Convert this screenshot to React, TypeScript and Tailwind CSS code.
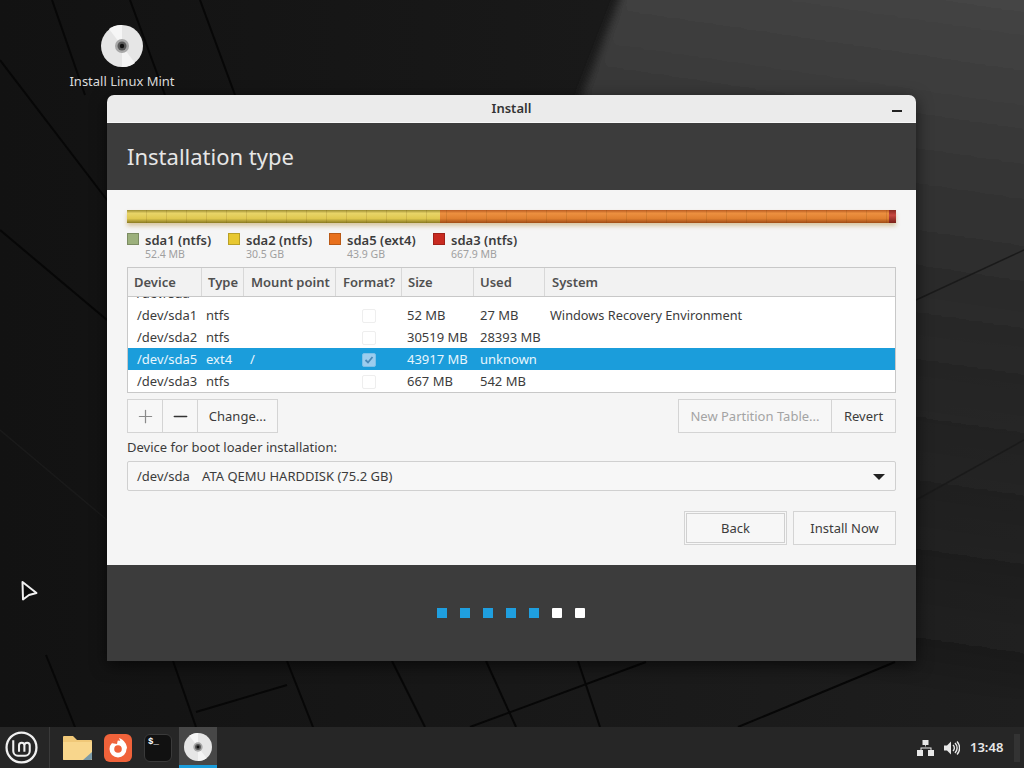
import React from 'react';
import { Minus, Plus } from 'lucide-react';

const font = { fontFamily: '"Noto Sans", sans-serif' };

const legend = [
  { name: 'sda1 (ntfs)', size: '52.4 MB', color: 'bg-[#9cb07c]', width: 'w-[101px]' },
  { name: 'sda2 (ntfs)', size: '30.5 GB', color: 'bg-[#e8c830]', width: 'w-[101px]' },
  { name: 'sda5 (ext4)', size: '43.9 GB', color: 'bg-[#e8701c]', width: 'w-[104px]' },
  { name: 'sda3 (ntfs)', size: '667.9 MB', color: 'bg-[#c82a20]', width: 'w-[100px]' },
];

const columns = 'grid grid-cols-[74px_42px_92px_66px_72px_71px_1fr]';

const headers = [
  { label: 'Device', pad: 'pl-[6px]' },
  { label: 'Type', pad: 'pl-[6px]' },
  { label: 'Mount point', pad: 'pl-[7px]' },
  { label: 'Format?', pad: 'pl-[7px]' },
  { label: 'Size', pad: 'pl-[6px]' },
  { label: 'Used', pad: 'pl-[6px]' },
  { label: 'System', pad: 'pl-[7px]' },
];

const rows = [
  { device: '/dev/sda1', type: 'ntfs', mount: '', checked: false, size: '52 MB', used: '27 MB', system: 'Windows Recovery Environment' },
  { device: '/dev/sda2', type: 'ntfs', mount: '', checked: false, size: '30519 MB', used: '28393 MB', system: '' },
  { device: '/dev/sda5', type: 'ext4', mount: '/', checked: true, size: '43917 MB', used: 'unknown', system: '', selected: true },
  { device: '/dev/sda3', type: 'ntfs', mount: '', checked: false, size: '667 MB', used: '542 MB', system: '' },
];

const Disc = ({ size }: { size: number }) => (
  <svg width={size} height={size} viewBox="0 0 42 42">
    <circle cx="21" cy="21" r="21" fill="#e6e6e6" />
    <path d="M21 21 L8 4 A21 21 0 0 1 21 0 Z" fill="#f6f6f6" />
    <path d="M21 21 L34 38 A21 21 0 0 1 21 42 Z" fill="#f4f4f4" />
    <circle cx="21" cy="21" r="7" fill="#a8a8a8" />
    <circle cx="21" cy="21" r="4.5" fill="#5a5a5a" />
    <circle cx="21" cy="21" r="2.2" fill="#111111" />
  </svg>
);

const Wallpaper = () => (
  <svg className="absolute inset-0 h-full w-full" viewBox="0 0 1024 727" preserveAspectRatio="none">
    <defs>
      <linearGradient id="wall-base" x1="0" y1="0" x2="1" y2="0">
        <stop offset="0" stopColor="#121212" />
        <stop offset="1" stopColor="#1e1e1e" />
      </linearGradient>
      <linearGradient id="wall-light" x1="0.9" y1="0" x2="0.8" y2="1">
        <stop offset="0" stopColor="#464646" />
        <stop offset="0.45" stopColor="#2a2a2a" />
        <stop offset="1" stopColor="#1e1e1e" stopOpacity="0" />
      </linearGradient>
      <filter id="wall-soft">
        <feGaussianBlur stdDeviation="5" />
      </filter>
    </defs>
    <rect width="1024" height="727" fill="url(#wall-base)" />
    <polygon points="627,-20 1060,-20 1060,700 760,700 580,100" fill="url(#wall-light)" filter="url(#wall-soft)" />
    <g stroke="#070707" strokeWidth="2" fill="none">
      <path d="M52 0 L85 95" />
      <path d="M130 0 L165 95" />
      <path d="M200 0 L235 95" />
      <path d="M0 60 L107 200" />
      <path d="M0 230 L107 320" />
      <path d="M46 655 L75 727" />
      <path d="M173 661 L196 727" />
      <path d="M287 661 L313 727" />
      <path d="M392 661 L425 727" />
      <path d="M486 661 L516 727" />
      <path d="M578 661 L600 727" />
      <path d="M196 712 L287 685" />
      <path d="M470 727 L646 662" />
      <path d="M738 727 L895 662" />
    </g>
    <g stroke="#1a1a1a" strokeWidth="1.5" fill="none">
      <path d="M0 430 L107 520" />
      <path d="M916 300 L1024 250" />
      <path d="M916 500 L1024 440" />
    </g>
  </svg>
);

const Cell = ({ children, className = '' }: { children?: React.ReactNode; className?: string }) => (
  <div className={`truncate ${className}`}>{children}</div>
);

const PartitionBar = () => (
  <div className="relative flex h-[13px] shadow-[0_3px_4px_rgba(180,140,60,0.45)]">
    <div className="w-[313px] bg-[linear-gradient(#9a8a30,#e8d468_25%,#e0c850_65%,#8a7a20)]" />
    <div className="flex-1 bg-[linear-gradient(#b85a20,#ec9040_25%,#e08030_65%,#a04c14)]" />
    <div className="w-[7px] bg-[linear-gradient(#8a2a20,#c84840_40%,#7a2018)]" />
    <div className="absolute inset-0 bg-[repeating-linear-gradient(90deg,transparent_0,transparent_19px,rgba(90,60,10,0.14)_19px,rgba(90,60,10,0.14)_20px)]" />
  </div>
);

const Checkbox = ({ checked, selected }: { checked: boolean; selected?: boolean }) => (
  <div
    className={`mx-auto flex h-[14px] w-[14px] items-center justify-center rounded-[2px] border ${
      selected ? 'border-[#7cc0e8] bg-[#9ccdee]' : 'border-[#eeeeee] bg-white'
    }`}
  >
    {checked && (
      <svg width="10" height="10" viewBox="0 0 10 10">
        <path d="M1.5 5 L4 7.5 L8.5 2" stroke="#4a8ab8" strokeWidth="1.8" fill="none" />
      </svg>
    )}
  </div>
);

const Button = ({ children, className = '' }: { children: React.ReactNode; className?: string }) => (
  <div className={`flex items-center justify-center border border-[#d4d4d4] bg-[#f7f7f7] pt-[1px] text-[13px] ${className}`}>
    {children}
  </div>
);

const Window = () => (
  <div className="absolute left-[107px] top-[95px] flex h-[566px] w-[809px] flex-col overflow-hidden rounded-t-[7px] shadow-[0_4px_16px_rgba(0,0,0,0.6)]">
    <div className="relative flex h-[28px] items-center justify-center border-b border-[#f7f7f7] bg-[#ebebeb] pt-[1px] text-[13px] font-semibold text-[#333333]">
      Install
      <div className="absolute right-[14px] top-[15px] h-[2px] w-[10px] bg-[#222222]" />
    </div>

    <div className="flex h-[67px] items-center bg-[#3c3c3c] pl-[20px] text-[22px] text-[#e6e6e6]">Installation type</div>

    <div className="flex flex-1 flex-col bg-[#f5f5f5] px-[20px] pt-[20px]">
      <PartitionBar />

      <div className="mt-[10px] flex h-[34px]">
        {legend.map(item => (
          <div key={item.name} className={`flex gap-[6px] ${item.width}`}>
            <div className={`h-[12px] w-[12px] border border-black/20 ${item.color}`} />
            <div>
              <div className="text-[13px] font-semibold leading-[14px] text-[#3c3c3c] whitespace-nowrap">{item.name}</div>
              <div className="text-[10.5px] leading-[14px] text-[#a0a0a0] whitespace-nowrap">{item.size}</div>
            </div>
          </div>
        ))}
      </div>

      <div className="border border-[#c8c8c8] bg-white">
        <div className={`${columns} h-[29px] border-b border-[#c8c8c8] bg-[#f2f2f2]`}>
          {headers.map(h => (
            <div key={h.label} className={`flex items-center border-r border-[#d8d8d8] pt-[1px] text-[13px] font-semibold text-[#505050] last:border-r-0 ${h.pad}`}>
              {h.label}
            </div>
          ))}
        </div>
        <div className="flex h-[95px] flex-col justify-end overflow-hidden">
          <div className={`${columns} h-[22px] shrink-0 items-center pt-[1px] text-[13px] text-[#3c3c3c]`}>
            <Cell className="pl-[9px]">/dev/sda</Cell>
          </div>
          {rows.map(row => (
            <div
              key={row.device}
              className={`${columns} h-[22px] shrink-0 items-center pt-[1px] text-[13px] ${row.selected ? 'bg-[#1b9ddb] text-[#e8f6fd]' : 'text-[#3c3c3c]'}`}
            >
              <Cell className="pl-[9px]">{row.device}</Cell>
              <Cell className="pl-[4px]">{row.type}</Cell>
              <Cell className="pl-[6px]">{row.mount}</Cell>
              <Checkbox checked={row.checked} selected={row.selected} />
              <Cell className="pl-[5px] overflow-visible">{row.size}</Cell>
              <Cell className="pl-[6px] overflow-visible">{row.used}</Cell>
              <Cell className="pl-[5px] text-[12.75px]">{row.system}</Cell>
            </div>
          ))}
        </div>
      </div>

      <div className="mt-[6px] flex h-[34px] justify-between text-[#3c3c3c]">
        <div className="flex">
          <Button className="w-[36px]">
            <Plus size={21} strokeWidth={1.4} className="text-[#8a8a8a]" />
          </Button>
          <Button className="w-[35px] border-l-0">
            <Minus size={21} strokeWidth={1.8} className="text-[#333333]" />
          </Button>
          <Button className="w-[80px] border-l-0">Change...</Button>
        </div>
        <div className="flex">
          <Button className="w-[154px] text-[#a4a4a4]">New Partition Table...</Button>
          <Button className="w-[64px] border-l-0">Revert</Button>
        </div>
      </div>

      <div className="mt-[6px] text-[13px] leading-[16px] text-[#3c3c3c]">Device for boot loader installation:</div>

      <div className="mt-[6px] flex h-[30px] items-center justify-between rounded-[2px] border border-[#d0d0d0] bg-[#f7f7f7] pl-[9px] pr-[10px] pt-[1px] text-[13px] text-[#3c3c3c]">
        <div className="flex">
          <span className="w-[65px]">/dev/sda</span>
          <span>ATA QEMU HARDDISK (75.2 GB)</span>
        </div>
        <div className="h-0 w-0 border-x-[6px] border-t-[6px] border-x-transparent border-t-[#222222]" />
      </div>

      <div className="mt-[20px] flex justify-end gap-[6px] text-[#3c3c3c]">
        <Button className="h-[34px] w-[103px] outline outline-1 -outline-offset-3 outline-[#d0d0d0]">Back</Button>
        <Button className="h-[34px] w-[103px]">Install Now</Button>
      </div>
    </div>

    <div className="flex h-[96px] items-center justify-center gap-[13px] bg-[#3c3c3c] pr-[2px]">
      {[0, 1, 2, 3, 4].map(i => (
        <div key={i} className="h-[10px] w-[10px] bg-[#1f9fdf]" />
      ))}
      {[5, 6].map(i => (
        <div key={i} className="h-[10px] w-[10px] rounded-[1px] bg-white" />
      ))}
    </div>
  </div>
);

const Taskbar = () => (
  <div className="flex h-[41px] items-center bg-[#262626] text-white">
    <div className="flex w-[50px] items-center justify-center self-stretch border-r border-[#3a3a3a] pr-[7px]">
      <svg width="33" height="33" viewBox="0 0 32 32" fill="none" stroke="#f0f0f0">
        <circle cx="16" cy="16" r="14.5" strokeWidth="2.2" />
        <path d="M8 9 V19.5 a4.5 4.5 0 0 0 4.5 4.5 h7 a4.5 4.5 0 0 0 4.5 -4.5 V14 a2.6 2.6 0 0 0 -5.2 0 V20 M13.6 20 V14 a2.6 2.6 0 0 1 5.2 0" strokeWidth="2" />
      </svg>
    </div>

    <div className="ml-[13px] flex items-center">
      <svg width="29" height="26" viewBox="0 0 29 26">
        <path d="M0 2 a1 1 0 0 1 1 -1 h9 l4 4 h14 a1 1 0 0 1 1 1 v18 a1 1 0 0 1 -1 1 h-27 a1 1 0 0 1 -1 -1 z" fill="#f0c878" />
        <path d="M0 7 h29 v17 a1 1 0 0 1 -1 1 h-27 a1 1 0 0 1 -1 -1 z" fill="#f8d68c" />
        <path d="M29 17 L20 25 H28 L29 24 z" fill="#7a9aa8" />
      </svg>
    </div>

    <div className="ml-[12px] flex h-[28px] w-[28px] items-center justify-center rounded-[6px] bg-[#f0623a]">
      <svg width="22" height="22" viewBox="0 0 22 22" fill="none">
        <circle cx="11" cy="12" r="8.5" fill="#ffffff" />
        <circle cx="11" cy="12" r="3.8" fill="#f0623a" />
        <path d="M12 1 C17 3 20 7 20 12 L15 8 Z" fill="#ffffff" />
        <path d="M4 6 L11 2 L10 7 Z" fill="#f0623a" />
      </svg>
    </div>

    <div className="ml-[12px] flex h-[28px] w-[28px] items-start rounded-[6px] border border-[#3a3a3a] bg-[#111111] pl-[3px] text-[9px] font-bold leading-[14px]" style={{ fontFamily: '"Liberation Mono", monospace' }}>
      $_
    </div>

    <div className="ml-[7px] flex h-full w-[38px] items-center justify-center border-b-[3px] border-[#1b9ddb] bg-[#474747] pt-[2px]">
      <Disc size={28} />
    </div>

    <div className="ml-auto flex items-center pr-[4px]">
      <svg width="17" height="16" viewBox="0 0 17 16" fill="#e8e8e8">
        <rect x="5.5" y="0" width="6" height="5" />
        <rect x="0" y="10" width="6" height="6" />
        <rect x="11" y="10" width="6" height="6" />
        <path d="M8 5 h1 v2.5 h5.5 v2.5 h-1 v-1.5 h-9 v1.5 h-1 v-2.5 h5.5 z" />
      </svg>
      <svg className="ml-[10px]" width="16" height="16" viewBox="0 0 16 16" fill="none" stroke="#e8e8e8">
        <path d="M0 5.5 h3 l4 -4 v13 l-4 -4 h-3 z" fill="#e8e8e8" stroke="none" />
        <path d="M9 5 a4 4 0 0 1 0 6 M11 3 a7 7 0 0 1 0 10 M13 1.5 a9.5 9.5 0 0 1 0 13" strokeWidth="1.4" />
      </svg>
      <div className="ml-[10px] w-[36px] text-[13px] font-semibold text-[#e8e8e8]">13:48</div>
      <div className="ml-[8px] h-[28px] w-[6px] bg-[#333333]" />
    </div>
  </div>
);

export default function App() {
  return (
    <div className="flex h-screen w-screen flex-col overflow-hidden" style={font}>
      <div className="relative flex-1">
        <Wallpaper />

        <div className="absolute left-[62px] top-[25px] flex w-[120px] flex-col items-center gap-[5px]">
          <Disc size={42} />
          <div className="text-[13px] leading-[18px] text-[#dcdcdc] whitespace-nowrap">Install Linux Mint</div>
        </div>

        <svg className="absolute left-[19px] top-[579px]" width="20" height="24" viewBox="0 0 20 24" fill="#0a0a0a" stroke="#f0f0f0" strokeWidth="2" strokeLinejoin="round">
          <path d="M3.5 3 L17.5 14 L10 16 L4 20.5 Z" />
        </svg>

        <Window />
      </div>
      <Taskbar />
    </div>
  );
}
